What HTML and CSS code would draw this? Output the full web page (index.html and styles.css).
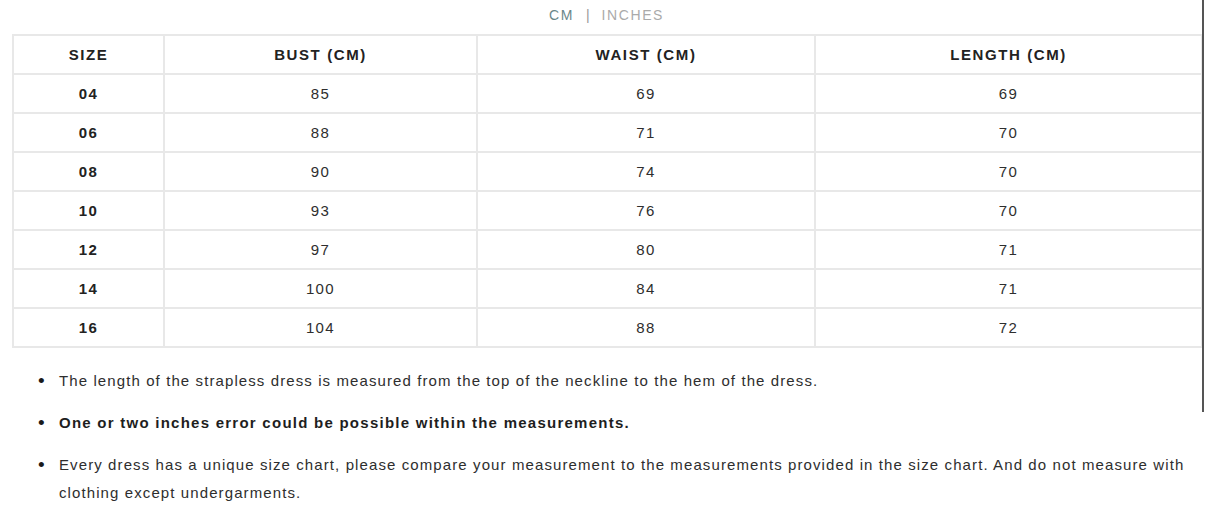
FILE: index.html
```html
<!DOCTYPE html>
<html>
<head>
<meta charset="utf-8">
<link rel="stylesheet" href="styles.css">
</head>
<body>
<div class="page">
  <div class="units"><span class="unit-on">CM</span><span class="sep">|</span><span class="unit-off">INCHES</span></div>
  <table class="chart">
    <colgroup><col class="c1"><col class="c2"><col class="c3"><col class="c4"></colgroup>
    <thead>
      <tr><th>SIZE</th><th>BUST (CM)</th><th>WAIST (CM)</th><th>LENGTH (CM)</th></tr>
    </thead>
    <tbody>
      <tr><td class="sz">04</td><td>85</td><td>69</td><td>69</td></tr>
      <tr><td class="sz">06</td><td>88</td><td>71</td><td>70</td></tr>
      <tr><td class="sz">08</td><td>90</td><td>74</td><td>70</td></tr>
      <tr><td class="sz">10</td><td>93</td><td>76</td><td>70</td></tr>
      <tr><td class="sz">12</td><td>97</td><td>80</td><td>71</td></tr>
      <tr><td class="sz">14</td><td>100</td><td>84</td><td>71</td></tr>
      <tr><td class="sz">16</td><td>104</td><td>88</td><td>72</td></tr>
    </tbody>
  </table>
  <ul class="notes">
    <li>The length of the strapless dress is measured from the top of the neckline to the hem of the dress.</li>
    <li><strong>One or two inches error could be possible within the measurements.</strong></li>
    <li>Every dress has a unique size chart, please compare your measurement to the measurements provided in the size chart. And do not measure with clothing except undergarments.</li>
  </ul>
  <div class="edge"></div>
</div>
</body>
</html>
```

FILE: styles.css
```css
html, body {
  margin: 0;
  padding: 0;
  background: #fff;
}
body {
  font-family: "Liberation Sans", Arial, sans-serif;
  color: #333;
  width: 1205px;
  height: 525px;
  overflow: hidden;
}
.page {
  position: relative;
  padding: 0 4px 0 12px;
}
.units {
  height: 34px;
  display: flex;
  justify-content: center;
  align-items: center;
  gap: 12px;
  font-size: 14px;
  letter-spacing: 1.6px;
  padding-bottom: 4px;
  box-sizing: border-box;
}
.unit-on { color: #6a8789; }
.sep { color: #999; letter-spacing: 0; }
.unit-off { color: #aaa; }
.chart {
  width: 1189px;
  border-collapse: collapse;
  table-layout: fixed;
  font-size: 15px;
  letter-spacing: 1.4px;
}
.c1 { width: 151px; }
.c2 { width: 313px; }
.c3 { width: 338px; }
.c4 { width: 387px; }
.chart th, .chart td {
  border: 2px solid #e8e8e8;
  height: 37px;
  padding: 0;
  text-align: center;
  vertical-align: middle;
}
.chart th { font-weight: bold; color: #222; letter-spacing: 1.6px; }
.chart td { color: #2e2e2e; }
.chart td.sz { font-weight: bold; color: #222; }
.notes {
  list-style: none;
  margin: 19px 0 0;
  padding-left: 26px;
  font-size: 15px;
  letter-spacing: 1.1px;
  line-height: 28px;
  color: #2e2e2e;
}
.notes li {
  display: flex;
  margin-bottom: 14px;
}
.notes li::before {
  content: "\2022";
  flex: none;
  width: 21px;
  font-size: 19px;
  line-height: 28px;
  color: #1a1a1a;
}
.notes strong { color: #1e1e1e; letter-spacing: 1.25px; }
.edge {
  position: absolute;
  top: 0;
  right: 1px;
  width: 2px;
  height: 412px;
  background: #555;
}
```
